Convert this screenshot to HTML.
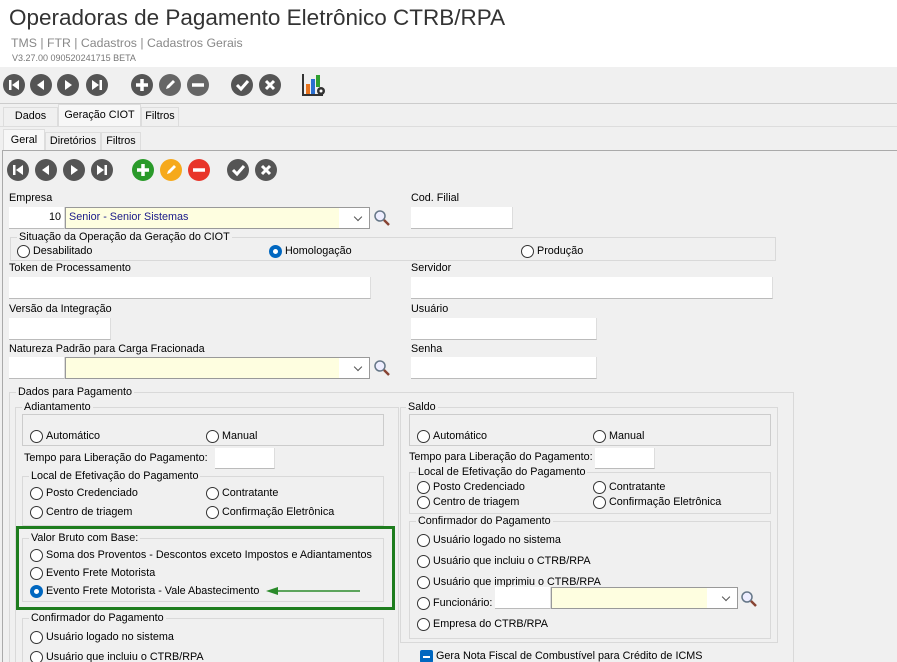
<!DOCTYPE html>
<html style="width:897px;height:662px;overflow:hidden"><head><meta charset="utf-8"><style>
*{box-sizing:border-box;margin:0;padding:0}
body{width:897px;height:662px;overflow:hidden;background:#f0f0f0;font-family:"Liberation Sans",Tahoma,sans-serif;font-size:10.8px;color:#000;position:relative}
.a{position:absolute;white-space:nowrap}
.hdr{position:absolute;left:0;top:0;width:897px;height:67px;background:#fff}
.c{position:absolute;width:22px;height:22px;border-radius:50%;background:#555}
.c svg{position:absolute;left:0;top:0}
.in{position:absolute;background:#fff;border-bottom:1px solid #bbb;border-right:1px solid #ddd}
.sel{position:absolute;background:#fefee0;border:1px solid #999}
.sel:after{content:"";position:absolute;right:8px;top:6px;width:5px;height:5px;border-right:1px solid #555;border-bottom:1px solid #555;transform:rotate(45deg)}
.sel .w{position:absolute;right:0;top:0;width:30px;height:100%;background:#fff}
.fs{position:absolute;border:1px solid #d9d9d9}
.lg{position:absolute;background:#f0f0f0;padding:0 2px;top:-8px;line-height:14px}
.r{position:absolute;width:13px;height:13px;border:1px solid #333;border-radius:50%;background:#fff}
.r.on{border:4px solid #0067c0}
.rl{position:absolute;white-space:nowrap;line-height:13px}
.tab{position:absolute;border:1px solid #ddd;border-bottom:none;text-align:center;line-height:17px;background:#f0f0f0}
</style></head><body>
<div class="hdr"></div>
<div class="a" style="left:9px;top:5px;font-size:22.5px;color:#333">Operadoras de Pagamento Eletrônico CTRB/RPA</div>
<div class="a" style="left:11px;top:36px;font-size:12.3px;color:#888">TMS | FTR | Cadastros | Cadastros Gerais</div>
<div class="a" style="left:12px;top:53px;font-size:9px;color:#777">V3.27.00 090520241715 BETA</div>

<div class="c" style="left:3px;top:74px"><svg width="22" height="22"><rect x="6" y="6" width="2.5" height="10" fill="#fff"/><path d="M16 6v10l-7-5z" fill="#fff"/></svg></div>
<div class="c" style="left:30px;top:74px"><svg width="22" height="22"><path d="M14 6v10l-7-5z" fill="#fff"/></svg></div>
<div class="c" style="left:57px;top:74px"><svg width="22" height="22"><path d="M8 6v10l7-5z" fill="#fff"/></svg></div>
<div class="c" style="left:86px;top:74px"><svg width="22" height="22"><path d="M6 6v10l7-5z" fill="#fff"/><rect x="13.5" y="6" width="2.5" height="10" fill="#fff"/></svg></div>
<div class="c" style="left:131px;top:74px"><svg width="22" height="22"><path d="M11 5v12M5 11h12" stroke="#fff" stroke-width="3.5"/></svg></div>
<div class="c" style="left:159px;top:74px;background:#666"><svg width="22" height="22"><path d="M7 15l1-3 6-6 2 2-6 6z" fill="#fff"/></svg></div>
<div class="c" style="left:187px;top:74px;background:#666"><svg width="22" height="22"><path d="M5 11h12" stroke="#fff" stroke-width="3.5"/></svg></div>
<div class="c" style="left:231px;top:74px"><svg width="22" height="22"><path d="M6 11l4 4 7-8" stroke="#fff" stroke-width="3" fill="none"/></svg></div>
<div class="c" style="left:259px;top:74px"><svg width="22" height="22"><path d="M7 7l8 8M15 7l-8 8" stroke="#fff" stroke-width="3"/></svg></div>
<svg class="a" style="left:302px;top:73px" width="24" height="24"><path d="M1 1v21h20" stroke="#333" stroke-width="2" fill="none"/><rect x="4" y="11" width="4" height="10" fill="#e8741e"/><rect x="9" y="6" width="4" height="15" fill="#2a6fd0"/><rect x="14" y="2" width="4" height="12" fill="#30a030"/><circle cx="19" cy="18" r="4" fill="#333"/><circle cx="19" cy="18" r="1.5" fill="#fff"/></svg>
<div class="a" style="left:0;top:103px;width:897px;height:1px;background:#ccc"></div>

<div class="tab" style="left:3px;top:107px;width:55px;height:19px">Dados</div>
<div class="tab" style="left:58px;top:104px;width:83px;height:22px;background:#f7f7f7;line-height:20px">Geração CIOT</div>
<div class="tab" style="left:141px;top:107px;width:38px;height:19px">Filtros</div>
<div class="a" style="left:0;top:126px;width:897px;height:1px;background:#ddd"></div>
<div class="tab" style="left:3px;top:129px;width:42px;height:21px;background:#f7f7f7;line-height:20px">Geral</div>
<div class="tab" style="left:45px;top:132px;width:56px;height:18px">Diretórios</div>
<div class="tab" style="left:101px;top:132px;width:40px;height:18px">Filtros</div>
<div class="a" style="left:2px;top:150px;width:895px;height:520px;border:1px solid #aaa;border-right:none;border-bottom:none"></div>

<div class="c" style="left:7px;top:159px"><svg width="22" height="22"><rect x="6" y="6" width="2.5" height="10" fill="#fff"/><path d="M16 6v10l-7-5z" fill="#fff"/></svg></div>
<div class="c" style="left:35px;top:159px"><svg width="22" height="22"><path d="M14 6v10l-7-5z" fill="#fff"/></svg></div>
<div class="c" style="left:63px;top:159px"><svg width="22" height="22"><path d="M8 6v10l7-5z" fill="#fff"/></svg></div>
<div class="c" style="left:91px;top:159px"><svg width="22" height="22"><path d="M6 6v10l7-5z" fill="#fff"/><rect x="13.5" y="6" width="2.5" height="10" fill="#fff"/></svg></div>
<div class="c" style="left:132px;top:159px;background:#2a9a2a"><svg width="22" height="22"><path d="M11 5v12M5 11h12" stroke="#fff" stroke-width="3.5"/></svg></div>
<div class="c" style="left:160px;top:159px;background:#f6a91b"><svg width="22" height="22"><path d="M7 15l1-3 6-6 2 2-6 6z" fill="#fff"/></svg></div>
<div class="c" style="left:188px;top:159px;background:#e8352a"><svg width="22" height="22"><path d="M5 11h12" stroke="#fff" stroke-width="3.5"/></svg></div>
<div class="c" style="left:227px;top:159px"><svg width="22" height="22"><path d="M6 11l4 4 7-8" stroke="#fff" stroke-width="3" fill="none"/></svg></div>
<div class="c" style="left:255px;top:159px"><svg width="22" height="22"><path d="M7 7l8 8M15 7l-8 8" stroke="#fff" stroke-width="3"/></svg></div>

<div class="a" style="left:9px;top:192px">Empresa</div>
<div class="in" style="left:9px;top:207px;width:56px;height:22px;text-align:right;padding:4px 3px 0 0">10</div>
<div class="sel" style="left:65px;top:207px;width:305px;height:22px;padding:3px 3px;color:#1a1a8a"><span class="w"></span>Senior - Senior Sistemas</div>
<svg class="a" style="left:373px;top:209px" width="18" height="18"><circle cx="7" cy="7" r="5" fill="#eef" stroke="#678" stroke-width="1.5"/><path d="M11 11l5 5" stroke="#843" stroke-width="2.5"/></svg>
<div class="a" style="left:411px;top:192px">Cod. Filial</div>
<div class="in" style="left:411px;top:207px;width:102px;height:22px"></div>

<div class="fs" style="left:10px;top:237px;width:766px;height:24px"><span class="lg" style="left:6px">Situação da Operação da Geração do CIOT</span></div>
<div class="r" style="left:17px;top:245px"></div><div class="rl" style="left:33px;top:245px">Desabilitado</div>
<div class="r on" style="left:269px;top:245px"></div><div class="rl" style="left:285px;top:245px">Homologação</div>
<div class="r" style="left:521px;top:245px"></div><div class="rl" style="left:537px;top:245px">Produção</div>

<div class="a" style="left:9px;top:262px">Token de Processamento</div>
<div class="in" style="left:9px;top:277px;width:362px;height:22px"></div>
<div class="a" style="left:411px;top:262px">Servidor</div>
<div class="in" style="left:411px;top:277px;width:362px;height:22px"></div>
<div class="a" style="left:9px;top:303px">Versão da Integração</div>
<div class="in" style="left:9px;top:318px;width:102px;height:22px"></div>
<div class="a" style="left:411px;top:303px">Usuário</div>
<div class="in" style="left:411px;top:318px;width:186px;height:22px"></div>
<div class="a" style="left:9px;top:343px">Natureza Padrão para Carga Fracionada</div>
<div class="in" style="left:9px;top:357px;width:56px;height:22px"></div>
<div class="sel" style="left:65px;top:357px;width:305px;height:22px"><span class="w"></span></div>
<svg class="a" style="left:373px;top:359px" width="18" height="18"><circle cx="7" cy="7" r="5" fill="#eef" stroke="#678" stroke-width="1.5"/><path d="M11 11l5 5" stroke="#843" stroke-width="2.5"/></svg>
<div class="a" style="left:411px;top:343px">Senha</div>
<div class="in" style="left:411px;top:357px;width:186px;height:22px"></div>

<div class="fs" style="left:9px;top:392px;width:785px;height:280px;border-bottom:none"><span class="lg" style="left:6px">Dados para Pagamento</span></div>

<div class="fs" style="left:15px;top:407px;width:384px;height:260px;border-bottom:none"><span class="lg" style="left:6px">Adiantamento</span></div>
<div class="fs" style="left:22px;top:414px;width:362px;height:32px;border-color:#ccc"></div>
<div class="r" style="left:30px;top:430px"></div><div class="rl" style="left:46px;top:430px">Automático</div>
<div class="r" style="left:206px;top:430px"></div><div class="rl" style="left:222px;top:430px">Manual</div>
<div class="a" style="left:24px;top:452px">Tempo para Liberação do Pagamento:</div>
<div class="in" style="left:215px;top:448px;width:60px;height:21px"></div>
<div class="fs" style="left:22px;top:476px;width:362px;height:50px"><span class="lg" style="left:6px">Local de Efetivação do Pagamento</span></div>
<div class="r" style="left:30px;top:487px"></div><div class="rl" style="left:46px;top:487px">Posto Credenciado</div>
<div class="r" style="left:206px;top:487px"></div><div class="rl" style="left:222px;top:487px">Contratante</div>
<div class="r" style="left:30px;top:506px"></div><div class="rl" style="left:46px;top:506px">Centro de triagem</div>
<div class="r" style="left:206px;top:506px"></div><div class="rl" style="left:222px;top:506px">Confirmação Eletrônica</div>

<div class="a" style="left:16px;top:526px;width:379px;height:84px;border:3px solid #1e7d1e;background:#f0f0f0"></div>
<div class="fs" style="left:22px;top:538px;width:362px;height:64px"><span class="lg" style="left:6px">Valor Bruto com Base:</span></div>
<div class="r" style="left:30px;top:549px"></div><div class="rl" style="left:46px;top:549px">Soma dos Proventos - Descontos exceto Impostos e Adiantamentos</div>
<div class="r" style="left:30px;top:567px"></div><div class="rl" style="left:46px;top:567px">Evento Frete Motorista</div>
<div class="r on" style="left:30px;top:585px"></div><div class="rl" style="left:46px;top:585px">Evento Frete Motorista - Vale Abastecimento</div>
<svg class="a" style="left:266px;top:586px" width="96" height="10"><path d="M4 5h90" stroke="#2a8a2a" stroke-width="1.5"/><path d="M0 5l12-4v8z" fill="#2a8a2a"/></svg>

<div class="fs" style="left:22px;top:618px;width:362px;height:50px;border-bottom:none"><span class="lg" style="left:6px">Confirmador do Pagamento</span></div>
<div class="r" style="left:30px;top:631px"></div><div class="rl" style="left:46px;top:631px">Usuário logado no sistema</div>
<div class="r" style="left:30px;top:651px"></div><div class="rl" style="left:46px;top:651px">Usuário que incluiu o CTRB/RPA</div>

<div class="fs" style="left:400px;top:407px;width:378px;height:236px"><span class="lg" style="left:5px">Saldo</span></div>
<div class="fs" style="left:409px;top:414px;width:362px;height:32px;border-color:#ccc"></div>
<div class="r" style="left:417px;top:430px"></div><div class="rl" style="left:433px;top:430px">Automático</div>
<div class="r" style="left:593px;top:430px"></div><div class="rl" style="left:609px;top:430px">Manual</div>
<div class="a" style="left:409px;top:451px">Tempo para Liberação do Pagamento:</div>
<div class="in" style="left:595px;top:448px;width:60px;height:21px"></div>
<div class="fs" style="left:409px;top:472px;width:362px;height:42px"><span class="lg" style="left:6px">Local de Efetivação do Pagamento</span></div>
<div class="r" style="left:417px;top:481px"></div><div class="rl" style="left:433px;top:481px">Posto Credenciado</div>
<div class="r" style="left:593px;top:481px"></div><div class="rl" style="left:609px;top:481px">Contratante</div>
<div class="r" style="left:417px;top:496px"></div><div class="rl" style="left:433px;top:496px">Centro de triagem</div>
<div class="r" style="left:593px;top:496px"></div><div class="rl" style="left:609px;top:496px">Confirmação Eletrônica</div>
<div class="fs" style="left:409px;top:521px;width:362px;height:118px"><span class="lg" style="left:6px">Confirmador do Pagamento</span></div>
<div class="r" style="left:417px;top:534px"></div><div class="rl" style="left:433px;top:534px">Usuário logado no sistema</div>
<div class="r" style="left:417px;top:555px"></div><div class="rl" style="left:433px;top:555px">Usuário que incluiu o CTRB/RPA</div>
<div class="r" style="left:417px;top:576px"></div><div class="rl" style="left:433px;top:576px">Usuário que imprimiu o CTRB/RPA</div>
<div class="r" style="left:417px;top:597px"></div><div class="rl" style="left:433px;top:597px">Funcionário:</div>
<div class="in" style="left:495px;top:587px;width:56px;height:22px"></div>
<div class="sel" style="left:551px;top:587px;width:187px;height:22px"><span class="w"></span></div>
<svg class="a" style="left:740px;top:590px" width="18" height="18"><circle cx="7" cy="7" r="5" fill="#eef" stroke="#678" stroke-width="1.5"/><path d="M11 11l5 5" stroke="#843" stroke-width="2.5"/></svg>
<div class="r" style="left:417px;top:618px"></div><div class="rl" style="left:433px;top:618px">Empresa do CTRB/RPA</div>

<div class="a" style="left:420px;top:650px;width:13px;height:13px;background:#0067c0;border-radius:2px"><div style="position:absolute;left:3px;top:6px;width:7px;height:1.5px;background:#fff"></div></div>
<div class="rl" style="left:436px;top:650px">Gera Nota Fiscal de Combustível para Crédito de ICMS</div>
</body></html>
